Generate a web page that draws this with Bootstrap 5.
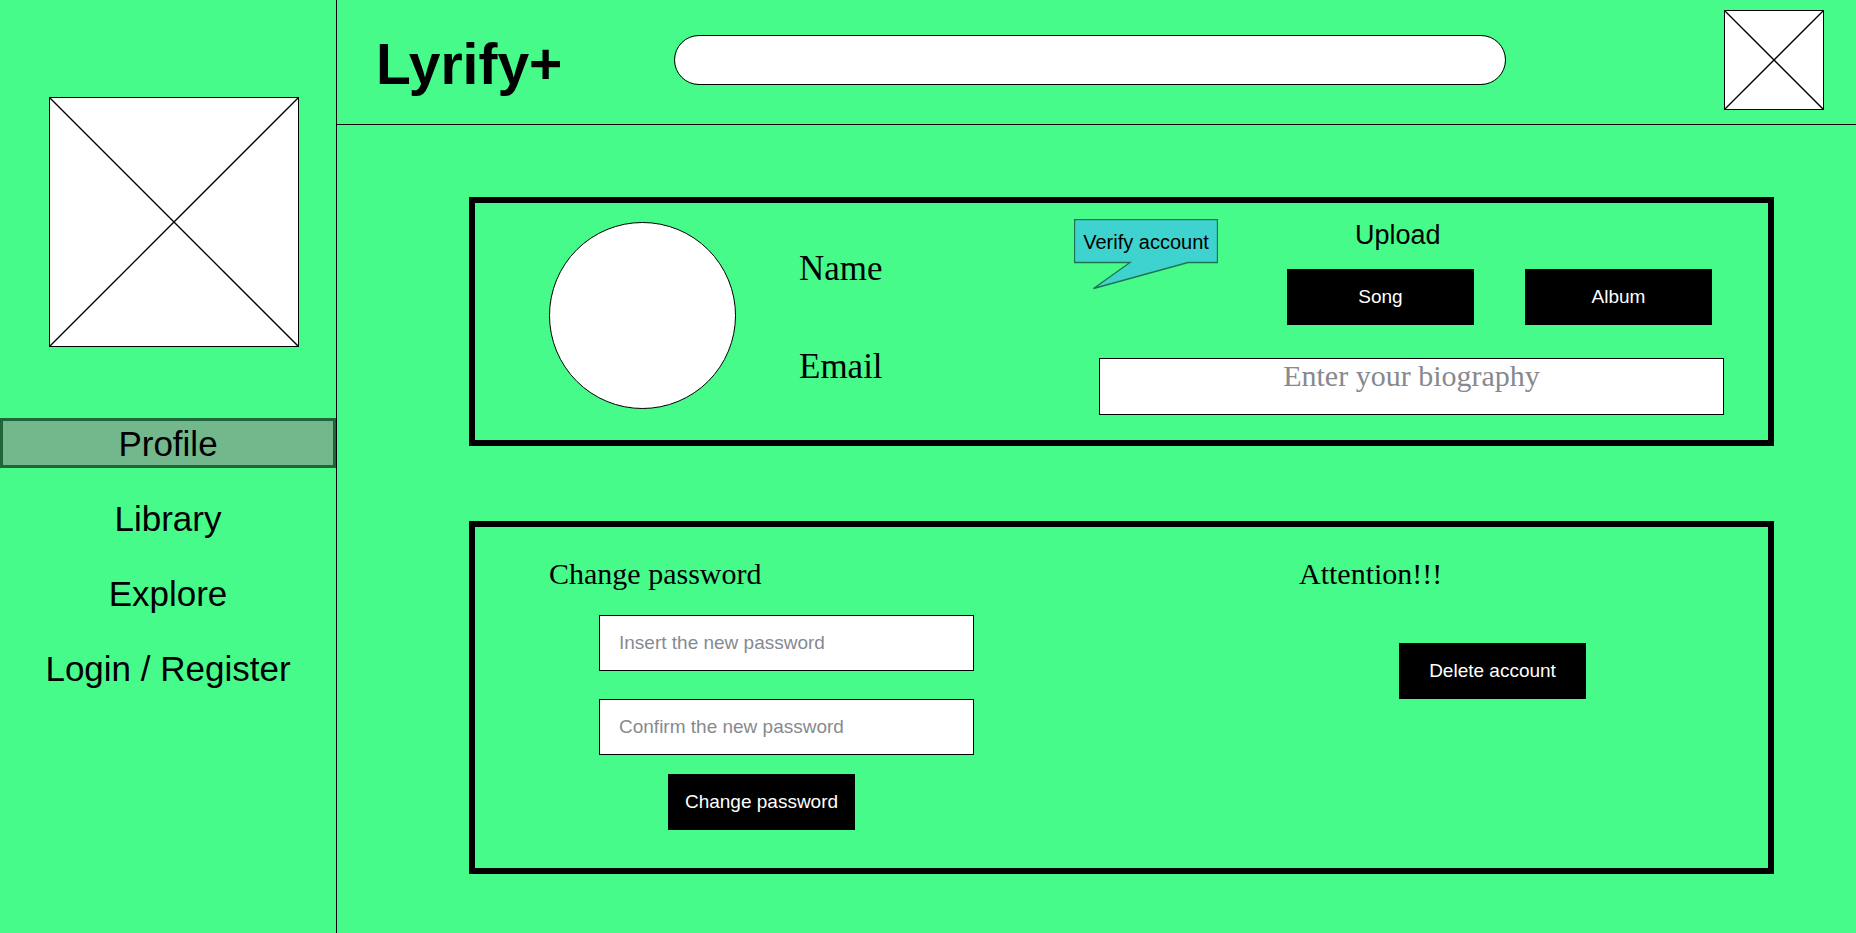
<!DOCTYPE html>
<html lang="en">
<head>
<meta charset="utf-8">
<meta name="viewport" content="width=device-width, initial-scale=1">
<title>Lyrify+ Profile</title>
<link href="https://cdn.jsdelivr.net/npm/bootstrap@5.3.0/dist/css/bootstrap.min.css" rel="stylesheet">
<style>
  body { background: #47fb8b; color: #000; font-family: "Liberation Sans", Arial, sans-serif; font-size: 19px; }
  .serif-text { font-family: "Liberation Serif", "Times New Roman", serif; }

  /* Sidebar */
  .side-col { width: 337px; border-right: 1px solid #000; padding-top: 97px; }
  .picture-box { display: block; background: #fff; border: 1px solid #000; }
  .picture-box line { stroke: #000; }
  .side-picture { width: 250px; height: 250px; margin: 0 auto 71px 49px; }
  .side-menu { gap: 25px; }
  .side-menu .nav-link { height: 50px; padding: 0; border: 3px solid transparent; border-radius: 0; color: #000; font-size: 35px; line-height: 46px; text-align: center; }
  .side-menu .nav-link.active { background: #72b88c; border-color: #1e6639; }

  /* Top bar */
  .top-bar { border-bottom: 1px solid #000; padding: 10px 32px 14px 39px; }
  .brand-name { width: 298px; padding-top: 8px; font-size: 57px; font-weight: 700; line-height: 60px; color: #000; text-decoration: none; }
  .search-box { height: 50px; border: 1px solid #000; border-radius: 25px; margin-right: 218px; padding: 0 24px; font-size: 19px; }
  .top-picture { width: 100px; height: 100px; }

  /* Panels */
  .page-body { padding: 72px 82px 59px 132px; gap: 75px; }
  .panel { border: 6px solid #000; }
  .profile-panel { padding: 0 44px 25px 74px; }
  .avatar { width: 187px; height: 187px; margin-top: 19px; background: #fff; border: 1px solid #000; }
  .identity { margin-left: 63px; padding-top: 41px; gap: 48px; font-size: 35px; line-height: 50px; }
  .profile-tools { width: 650px; padding-top: 16px; }
  .verify-btn { width: 144px; height: 44px; padding: 1px 0 0; border: 0; background: none; font-size: 20px; white-space: nowrap; }
  .verify-btn svg { width: 144px; height: 72px; }
  .upload-group { margin-right: 12px; }
  .upload-title { margin: 0 0 18px; padding-left: 68px; font-size: 27px; font-weight: 400; line-height: 32px; }
  .upload-buttons { gap: 51px; }
  .solid-btn { width: 187px; height: 56px; padding: 0; border: 0; border-radius: 0; background: #000; color: #fff; font-size: 19px; }
  .solid-btn:hover { background: #222; color: #fff; }
  .field { border: 1px solid #000; border-radius: 0; background: #fff; color: #000; }
  .field::placeholder { color: #868a8f; }
  textarea.bio-field { width: 625px; height: 57px; min-height: 57px; margin: 33px 0 0 25px; padding: 0; font-size: 30px; line-height: 34px; text-align: center; resize: none; }

  .security-panel { display: grid; grid-template-columns: 750fr 469fr; padding: 29px 0 38px 74px; }
  .panel-title { margin: 0 0 23px; font-size: 30px; font-weight: 400; line-height: 36px; }
  .password-form { margin-left: 50px; width: 375px; }
  .password-field { height: 56px; padding: 0 19px; margin-bottom: 28px; font-size: 19px; }
  .password-field:last-of-type { margin-bottom: 19px; }
  .password-form .solid-btn { margin-left: 69px; }
  .danger-zone .solid-btn { margin: 28px 0 0 100px; }
</style>
</head>
<body>
<div class="d-flex min-vh-100">
  <aside class="side-col flex-shrink-0">
    <svg class="picture-box side-picture" viewBox="0 0 100 100" role="img" aria-label="Cover picture">
      <line x1="0" y1="0" x2="100" y2="100" vector-effect="non-scaling-stroke" stroke-width="1.35"/>
      <line x1="100" y1="0" x2="0" y2="100" vector-effect="non-scaling-stroke" stroke-width="1.35"/>
    </svg>
    <nav class="nav flex-column side-menu">
      <a class="nav-link active" href="#profile" aria-current="page">Profile</a>
      <a class="nav-link" href="#library">Library</a>
      <a class="nav-link" href="#explore">Explore</a>
      <a class="nav-link" href="#login">Login / Register</a>
    </nav>
  </aside>

  <div class="flex-grow-1">
    <header class="top-bar d-flex align-items-center">
      <a class="brand-name flex-shrink-0" href="#home">Lyrify+</a>
      <input class="search-box form-control flex-grow-1" type="search" aria-label="Search">
      <svg class="picture-box top-picture flex-shrink-0" viewBox="0 0 100 100" role="img" aria-label="User picture">
        <line x1="0" y1="0" x2="100" y2="100" vector-effect="non-scaling-stroke" stroke-width="1.35"/>
        <line x1="100" y1="0" x2="0" y2="100" vector-effect="non-scaling-stroke" stroke-width="1.35"/>
      </svg>
    </header>

    <main class="page-body d-flex flex-column">
      <section class="panel profile-panel d-flex align-items-start">
        <div class="avatar rounded-circle flex-shrink-0"></div>
        <div class="identity serif-text d-flex flex-column">
          <div>Name</div>
          <div>Email</div>
        </div>
        <div class="profile-tools ms-auto">
          <div class="d-flex justify-content-between align-items-start">
            <button type="button" class="verify-btn position-relative">
              <svg class="position-absolute top-0 start-0" viewBox="0 0 144 72" aria-hidden="true">
                <path d="M.5 .5H143.5V43.5H114L19.5 69.5L56 43.5H.5Z" fill="#3fd3cf" stroke="#1f7450" stroke-width="1.35"/>
              </svg>
              <span class="position-relative">Verify account</span>
            </button>
            <div class="upload-group">
              <h2 class="upload-title">Upload</h2>
              <div class="upload-buttons d-flex">
                <button type="button" class="btn solid-btn">Song</button>
                <button type="button" class="btn solid-btn">Album</button>
              </div>
            </div>
          </div>
          <textarea class="form-control field bio-field serif-text" aria-label="Biography" placeholder="Enter your biography"></textarea>
        </div>
      </section>

      <section class="panel security-panel">
        <div>
          <h2 class="panel-title serif-text">Change password</h2>
          <form class="password-form">
            <input class="form-control field password-field" type="password" aria-label="New password" placeholder="Insert the new password">
            <input class="form-control field password-field" type="password" aria-label="Confirm password" placeholder="Confirm the new password">
            <button type="button" class="btn solid-btn">Change password</button>
          </form>
        </div>
        <div class="danger-zone">
          <h2 class="panel-title serif-text">Attention!!!</h2>
          <button type="button" class="btn solid-btn">Delete account</button>
        </div>
      </section>
    </main>
  </div>
</div>
<script src="https://cdn.jsdelivr.net/npm/bootstrap@5.3.0/dist/js/bootstrap.bundle.min.js"></script>
</body>
</html>
